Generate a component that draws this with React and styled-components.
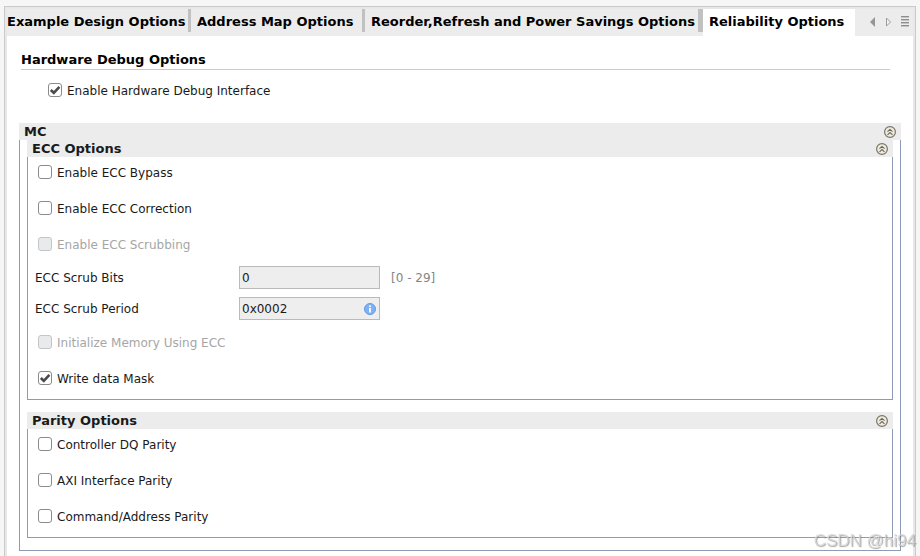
import { useState } from "react";
import styled, { createGlobalStyle } from "styled-components";

const tabs = [
  { label: "Example Design Options", width: 184 },
  { label: "Address Map Options", width: 174 },
  { label: "Reorder,Refresh and Power Savings Options", width: 338 },
  { label: "Reliability Options", width: 152 },
];

export default function App() {
  const [active, setActive] = useState(3);

  return (
    <>
      <GlobalStyle />
      <Frame>
        <TabBar>
          <TabList role="tablist">
            {tabs.map(({ label, width }, index) => (
              <Tab
                key={label}
                role="tab"
                aria-selected={index === active}
                $active={index === active}
                $first={index === 0}
                $beforeActive={index === active - 1}
                $width={width}
                onClick={() => setActive(index)}
              >
                {label}
              </Tab>
            ))}
          </TabList>
          <TabTools>
            <ToolButton aria-label="Previous tab">
              <svg width="6" height="10" viewBox="0 0 6 10">
                <path d="M6 0V10L1 5Z" fill="#969696" />
              </svg>
            </ToolButton>
            <ToolButton aria-label="Next tab">
              <svg width="6" height="10" viewBox="0 0 6 10">
                <path d="M1.5 1V9L5.5 5Z" fill="#f4f4f4" stroke="#9b9b9b" />
              </svg>
            </ToolButton>
            <ToolButton aria-label="Tab list">
              <svg width="8" height="11" viewBox="0 0 8 11" shapeRendering="crispEdges">
                <path d="M0 .5H8M0 3.5H8M0 6.5H8M0 9.5H8" stroke="#8e8e8e" />
                <path d="M0 1.5H8M0 4.5H8M0 7.5H8M0 10.5H8" stroke="#c4c4c4" />
              </svg>
            </ToolButton>
          </TabTools>
        </TabBar>

        <Content>
          <Debug>
            <DebugTitle>Hardware Debug Options</DebugTitle>
            <DebugBody>
              <CheckItem id="hwDebug" label="Enable Hardware Debug Interface" checked />
            </DebugBody>
          </Debug>

          <Section title="MC">
            <Nested>
              <Section title="ECC Options">
                <Options>
                  <CheckList>
                    <CheckItem id="eccBypass" label="Enable ECC Bypass" />
                    <CheckItem id="eccCorrection" label="Enable ECC Correction" />
                    <CheckItem id="eccScrubbing" label="Enable ECC Scrubbing" disabled />
                  </CheckList>
                  <Fields>
                    <FieldLabel htmlFor="scrubBits">ECC Scrub Bits</FieldLabel>
                    <FieldBox>
                      <TextInput id="scrubBits" defaultValue="0" readOnly />
                    </FieldBox>
                    <Hint>[0 - 29]</Hint>
                    <FieldLabel htmlFor="scrubPeriod">ECC Scrub Period</FieldLabel>
                    <FieldBox>
                      <TextInput id="scrubPeriod" defaultValue="0x0002" readOnly />
                      <InfoIcon />
                    </FieldBox>
                  </Fields>
                  <CheckList>
                    <CheckItem id="initMemory" label="Initialize Memory Using ECC" disabled />
                    <CheckItem id="dataMask" label="Write data Mask" checked />
                  </CheckList>
                </Options>
              </Section>

              <Section title="Parity Options">
                <Options>
                  <CheckList>
                    <CheckItem id="dqParity" label="Controller DQ Parity" />
                    <CheckItem id="axiParity" label="AXI Interface Parity" />
                    <CheckItem id="caParity" label="Command/Address Parity" />
                  </CheckList>
                </Options>
              </Section>
            </Nested>
          </Section>
        </Content>
      </Frame>
      <Watermark>CSDN @hi94</Watermark>
    </>
  );
}

// Collapsible group with a grey title bar
const Section = ({ title, children }) => {
  const [open, setOpen] = useState(true);

  return (
    <section>
      <SectionHeader>
        <SectionTitle>{title}</SectionTitle>
        <CollapseButton
          aria-label={`Toggle ${title}`}
          aria-expanded={open}
          onClick={() => setOpen(!open)}
        >
          <svg width="12" height="12" viewBox="0 0 12 12" fill="none">
            <circle cx="6" cy="6" r="5.4" fill="#eeebdc" stroke="#77756b" strokeWidth="1.2" />
            <path
              d="M3.5 5.6L6 3.4L8.5 5.6M3.5 8.8L6 6.6L8.5 8.8"
              stroke="#69675c"
              strokeWidth="1.1"
            />
          </svg>
        </CollapseButton>
      </SectionHeader>
      {open ? <SectionBody>{children}</SectionBody> : null}
    </section>
  );
};

const CheckItem = ({ id, label, checked = false, disabled = false }) => (
  <CheckRow>
    <CheckBox>
      <input id={id} type="checkbox" defaultChecked={checked} disabled={disabled} />
      <svg width="14" height="14" viewBox="0 0 14 14" fill="none">
        <path d="M2.8 7L5.8 9.8L11.4 3.8" stroke="#4b4b4b" strokeWidth="2.6" />
      </svg>
    </CheckBox>
    <CheckLabel htmlFor={id} $disabled={disabled}>
      {label}
    </CheckLabel>
  </CheckRow>
);

const InfoIcon = () => (
  <svg width="12" height="12" viewBox="0 0 12 12">
    <circle cx="6" cy="6" r="5.5" fill="#7db1fa" stroke="#6798dc" />
    <circle cx="6" cy="3.2" r="1" fill="#fff" />
    <path d="M6 5V9.5" stroke="#fff" strokeWidth="1.8" />
  </svg>
);

const GlobalStyle = createGlobalStyle`
  * {
    box-sizing: border-box;
  }

  body {
    margin: 0;
    background-color: #f6f6f6;
    color: #1a1a1a;
    font-family: "DejaVu Sans", sans-serif;
    font-size: 12px;
    line-height: 17px;
  }

  button,
  input {
    margin: 0;
    padding: 0;
    border: none;
    color: inherit;
    font: inherit;
  }

  svg {
    display: block;
    flex: none;
  }
`;

const Frame = styled.main`
  display: flex;
  flex-direction: column;
  min-height: calc(100vh - 6px);
  margin: 6px 4px 0;
  padding: 2px 2px 0;
  border: 1px solid #cacaca;
  border-bottom: none;
  background-color: #e8e8e8;
`;

const TabBar = styled.div`
  display: flex;
  justify-content: space-between;
  height: 27px;
  background-color: #ececec;
`;

const TabList = styled.div`
  display: flex;
`;

const Tab = styled.button`
  display: flex;
  align-items: center;
  justify-content: space-between;
  min-width: ${({ $width }) => $width}px;
  padding: 0 0 2px ${({ $first }) => ($first ? "0" : "6px")};
  background-color: ${({ $active }) => ($active ? "#fff" : "transparent")};
  color: #000;
  font-size: 13px;
  font-weight: bold;
  white-space: nowrap;

  &::after {
    content: "";
    display: ${({ $active }) => ($active ? "none" : "block")};
    align-self: flex-start;
    width: ${({ $beforeActive }) => ($beforeActive ? "5px" : "3px")};
    height: 23px;
    background-color: #c1c1c1;
  }
`;

const TabTools = styled.div`
  display: flex;
  align-items: center;
  gap: 10px;
  padding: 0 4px 2px 0;
`;

const ToolButton = styled.button`
  background: none;
`;

const Content = styled.div`
  flex: 1;
  padding: 15px 12px 5px;
  background-color: #fff;
`;

const Debug = styled.section`
  margin-bottom: 22px;
  padding: 0 11px 0 2px;
`;

const DebugTitle = styled.h2`
  margin: 0;
  padding-bottom: 1px;
  border-bottom: 1px solid #cbcbcb;
  color: #000;
  font-size: 13px;
  line-height: 17px;
`;

const DebugBody = styled.div`
  padding: 9px 0 0 27px;
`;

const SectionHeader = styled.header`
  display: flex;
  align-items: center;
  justify-content: space-between;
  height: 17px;
  padding: 0 5px;
  background-color: #ececec;
`;

const SectionTitle = styled.h3`
  margin: 0;
  font-size: 13px;
  line-height: 17px;
`;

const CollapseButton = styled.button`
  background: none;
  cursor: pointer;
`;

const SectionBody = styled.div`
  border: 1px solid #8f9bb6;
  border-top: none;
`;

const Nested = styled.div`
  display: flex;
  flex-direction: column;
  gap: 12px;
  padding: 0 7px 12px;
`;

const Options = styled.div`
  padding: 4px 7px 10px;
`;

const CheckList = styled.div`
  display: flex;
  flex-direction: column;
  gap: 14px;
  padding-left: 3px;
`;

const CheckRow = styled.div`
  display: flex;
  align-items: center;
  gap: 5px;
  height: 22px;
`;

const CheckBox = styled.span`
  position: relative;
  width: 14px;
  height: 14px;

  input {
    display: block;
    width: 14px;
    height: 14px;
    appearance: none;
    border: 1px solid #8b8b8b;
    border-radius: 3px;
    background-color: #fff;
  }

  input:disabled {
    border-color: #c5c5c5;
    background-color: #e9eaeb;
  }

  svg {
    position: absolute;
    inset: 0;
    visibility: hidden;
    pointer-events: none;
  }

  input:checked + svg {
    visibility: visible;
  }
`;

const CheckLabel = styled.label`
  padding-top: 2px;
  color: ${({ $disabled }) => ($disabled ? "#a6a6a6" : "inherit")};
`;

const Fields = styled.div`
  display: grid;
  grid-template-columns: 204px 141px auto;
  align-items: center;
  row-gap: 8px;
  margin: 11px 0;
`;

const FieldLabel = styled.label`
  grid-column: 1;
  padding-top: 2px;
`;

const FieldBox = styled.div`
  display: flex;
  align-items: center;
  height: 23px;
  padding: 0 3px 0 2px;
  border: 1px solid #bababa;
  background-color: #eee;
`;

const TextInput = styled.input`
  flex: 1;
  min-width: 0;
  padding-top: 2px;
  background: none;
  outline: none;
`;

const Hint = styled.span`
  padding: 2px 0 0 11px;
  color: #858585;
`;

const Watermark = styled.div`
  position: fixed;
  right: 4px;
  bottom: 5px;
  color: rgba(215, 215, 215, 0.8);
  font-family: "Liberation Sans", sans-serif;
  font-size: 17px;
  line-height: 20px;
  text-shadow: 1px 1px 1px rgba(110, 110, 110, 0.6);
  pointer-events: none;
`;
